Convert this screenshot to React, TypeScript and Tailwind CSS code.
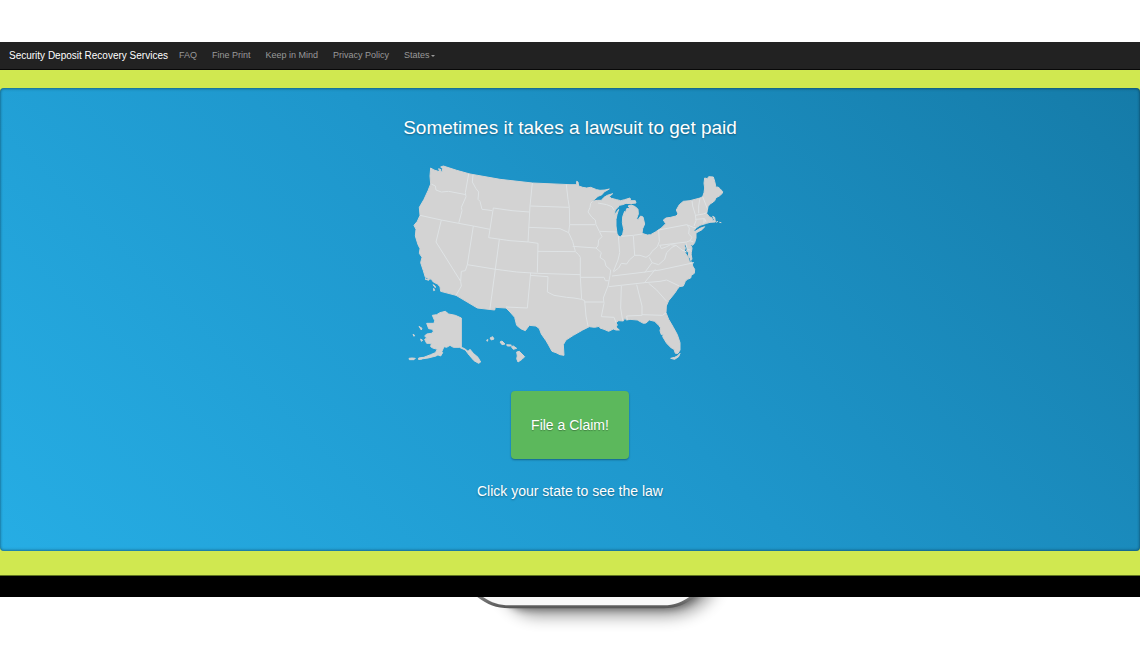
import React from "react";

const navLinks = ["FAQ", "Fine Print", "Keep in Mind", "Privacy Policy"];

const mainland =
  "M92 36L102 42L112 45L119 48L116 38L123 41L121 49L127 46L128 38L122 33L130 30L170 43L210 54L300 70L397 81L510 86L530 86L530 76L534 78L536 90L548 94L560 96L572 94L590 101L600 103L615 102L628 99L612 108L606 116L594 121L583 131L576 136L592 133L604 133L612 124L622 118L638 113L628 122L634 127L650 131L662 134L674 131L690 126L692 134L706 134L708 141L690 143L678 142L668 146L658 148L654 154L646 162L642 176L650 168L656 160L651 176L648 190L648 210L651 232L656 241L662 242L668 235L671 220L667 200L668 182L674 166L676 172L680 158L690 156L684 150L694 147L706 152L714 160L715 174L710 188L714 191L722 180L729 183L734 204L728 218L726 232L742 237L752 236L766 228L784 216L797 203L790 192L798 186L812 184L828 180L834 174L829 162L838 146L850 136L870 134L900 126L908 122L912 110L914 96L912 82L914 66L922 68L926 62L940 63L944 76L948 94L954 93L960 98L968 107L967 112L958 120L948 125L944 134L940 138L930 144L924 152L922 164L920 172L928 182L936 186L938 194L944 194L938 181L944 184L946 198L930 199L920 202L900 208L888 216L882 224L888 232L888 246L884 260L878 268L870 262L876 276L874 290L872 308L865 300L866 290L860 285L862 276L857 266L852 266L856 276L853 286L860 297L866 305L868 318L876 318L878 330L884 340L883 352L874 358L872 366L862 370L856 376L850 390L838 392L832 400L824 412L806 434L799 450L798 470L806 490L820 514L832 536L840 560L840 582L834 592L826 592L822 580L814 576L800 562L788 542L790 534L784 536L780 524L782 516L776 508L764 496L748 492L738 501L730 502L712 492L690 490L680 492L674 487L670 495L656 494L648 500L652 507L648 513L658 522L648 522L640 519L626 526L612 520L600 516L598 511L584 514L568 512L548 522L520 538L498 552L490 566L492 598L480 596L468 590L456 586L444 564L438 554L424 534L418 518L408 510L388 508L376 524L362 518L350 508L344 484L330 468L318 456L286 454L284 462L232 456L168 418L122 406L120 392L112 384L100 378L94 370L76 364L70 344L62 320L66 304L58 292L60 278L54 266L46 240L48 220L42 208L52 196L60 178L58 154L72 130L84 104L92 84L90 60Z";

const islands = [
  "M882 228L900 217L914 212L906 221L888 231Z",
  "M948 199L954 196M958 199L964 200",
  "M868 276L874 280L870 290Z",
  "M870 300L874 298L876 310L872 314Z",
  "M812 607L824 604L832 600L840 592L836 602L824 610Z",
  "M77 370L88 369L86 373ZM99 386L106 391L106 395ZM101 397L104 403L101 404ZM75 368L79 370Z",
  "M97 478L110 476L120 470L136 466L146 474L166 478L184 486L184 574L194 578L204 586L210 580L220 592L234 604L242 618L236 622L222 614L208 598L196 582L178 574L160 574L150 568L140 574L132 572L124 590L108 600L84 606L56 610L92 596L106 590L112 580L98 576L92 572L94 562L80 562L74 550L80 546L74 540L80 534L94 532L100 528L98 520L86 518L80 502L102 502L104 494Z",
  "M27 607L36 606L46 607L42 611L28 611ZM56 606L70 604L66 609L56 610Z",
  "M57 511L66 517L64 522ZM39 535L44 538L42 541ZM62 549L68 553L64 556Z",
  "M112 596L124 586L128 590L122 600Z",
  "M270 546L278 542L282 549L274 552ZM260 552L264 551L262 556Z",
  "M300 558L306 555L315 564L306 566Z",
  "M320 566L334 567L332 570L322 570ZM334 572L340 570L350 577L340 580Z",
  "M350 588L358 586L374 602L366 610L354 618L350 608L352 600Z",
];

const borders = [
  "M94 84L106 90L108 102L124 108L146 106L198 116",
  "M206 54L196 110L198 122L184 154L186 164L176 202",
  "M60 178L124 192L176 202L220 210L270 220",
  "M219 57L217 78L228 98L236 108L234 130L240 136L246 160L264 162L276 164",
  "M280 156L336 164L388 168",
  "M280 156L266 245L330 254L386 258L414 262L412 350",
  "M397 81L390 150L384 258",
  "M391 150L507 154",
  "M386 214L480 218L506 230L518 256L526 286",
  "M124 192L108 258L182 376L184 390L168 418",
  "M220 210L202 326L288 340L350 348L412 352L540 356",
  "M202 326L196 344L184 346L182 376",
  "M298 250L270 458",
  "M414 286L526 287L536 296L541 304L541 364L545 430",
  "M392 350L382 456L318 453",
  "M390 358L444 362L442 408L462 418L500 424L522 426L545 430L554 434L558 480L564 510",
  "M499 86L504 130L508 154L509 205L506 230",
  "M509 206L586 206",
  "M578 136L572 142L570 154L564 168L576 184L586 192L588 206L598 226L606 242L596 252L594 270L588 276L518 271",
  "M594 141L620 146L636 152L642 162",
  "M600 226L650 228",
  "M655 240L659 290L654 312L640 346",
  "M588 276L604 290L600 304L614 314L618 330L632 342L630 358L624 390",
  "M541 364L612 364L616 374L626 374",
  "M664 241L700 238L726 234",
  "M700 240L704 298L688 312L680 324L664 322L656 336L640 348",
  "M704 298L720 298L738 304L750 296L756 286L772 272L778 256L776 222",
  "M776 222L860 206L868 216L866 234L876 244L870 254L860 258L778 268",
  "M636 360L720 350L780 342L882 320",
  "M626 392L734 380L780 376L800 372L838 390",
  "M748 304L756 320L734 350M756 320L776 326L794 310L800 290L816 274L828 268",
  "M780 268L784 278L800 272L812 266L828 268L846 282L860 288",
  "M732 382L766 340M746 382L770 402L800 436",
  "M624 390L610 426L612 442L604 482L642 484L648 500",
  "M554 438L610 438",
  "M664 390L662 456L668 494",
  "M710 386L726 450L726 478L680 480L682 492",
  "M726 476L788 478L798 470",
  "M870 254L880 258M858 262L862 280L872 282",
  "M860 206L880 214L888 216M882 210L888 194L886 176L878 150L876 134",
  "M900 126L896 150L896 172M908 122L922 158",
  "M886 178L910 174L920 170M886 190L914 188L918 198M912 188L912 202",
];

function StateMap() {
  return (
    <svg
      role="img"
      aria-label="United States"
      viewBox="0 0 1020 645"
      className="mt-4 h-[215px] w-[340px] max-w-full cursor-pointer"
    >
      <g fill="#d3d3d3" stroke="#d3d3d3" strokeWidth="3" strokeLinejoin="round">
        <path d={mainland} />
        {islands.map((d) => (
          <path key={d} d={d} />
        ))}
      </g>
      <g fill="none" stroke="#dfe3e5" strokeWidth="3" strokeLinejoin="round">
        {borders.map((d) => (
          <path key={d} d={d} />
        ))}
      </g>
    </svg>
  );
}

function DeviceEdge() {
  return (
    <svg aria-hidden="true" viewBox="-180 0 1140 171" className="mx-auto block h-[57px] w-[380px]">
      <defs>
        <filter id="soft" x="-20%" y="-100%" width="140%" height="300%">
          <feGaussianBlur stdDeviation="24" />
        </filter>
        <filter id="near" x="-20%" y="-100%" width="140%" height="300%">
          <feGaussianBlur stdDeviation="9" />
        </filter>
        <linearGradient id="rim" x1="0" x2="0" y1="0" y2="1">
          <stop offset="0" stopColor="#8a8a8a" />
          <stop offset="1" stopColor="#555" />
        </linearGradient>
      </defs>
      <path
        d="M170 -40H830C810 20 750 56 670 56H300C240 56 210 30 170 -40Z"
        fill="#000"
        opacity="0.4"
        filter="url(#soft)"
      />
      <path
        d="M180 -20H790C765 20 730 40 670 40H260C220 40 200 20 180 -20Z"
        fill="#000"
        opacity="0.3"
        filter="url(#near)"
      />
      <path d="M96 -12C140 22 160 34 215 34H670C720 34 750 14 776 -12Z" fill="url(#rim)" />
      <path d="M112 -12C150 16 170 25 215 25H670C712 25 740 8 762 -12Z" fill="#f8f8f8" />
    </svg>
  );
}

export default function App() {
  return (
    <div className="min-h-screen bg-white pt-[42px] font-['Liberation_Sans',Arial,sans-serif]">
      <nav className="flex h-7 items-center gap-[15px] border-b border-[#080808] bg-[#222] pl-[9px] text-[9px] text-[#999]">
        <a href="#home" className="-mr-1 text-[10px] text-white">
          Security Deposit Recovery Services
        </a>
        {navLinks.map((label) => (
          <a key={label} href="#info" className="hover:text-white">
            {label}
          </a>
        ))}
        <button type="button" className="flex items-center gap-px hover:text-white">
          States
          <svg aria-hidden="true" viewBox="0 0 4 2" className="h-[2px] w-1" fill="currentColor">
            <path d="M0 0H4L2 2Z" />
          </svg>
        </button>
      </nav>

      <main className="bg-[#d0e850] pt-[18px] pb-6">
        <section className="flex flex-col items-center rounded bg-linear-[45deg,#26ade4,#1e96cb_50%,#157ba8] px-4 pt-7 pb-12 text-center text-white shadow-[inset_0_1px_3px_rgba(0,0,0,0.3),inset_0_-1px_3px_rgba(0,0,0,0.3)] text-shadow-[0_1px_2px_rgba(0,0,0,0.35)]">
          <h1 className="text-[19px] leading-6">Sometimes it takes a lawsuit to get paid</h1>
          <StateMap />
          <button
            type="button"
            className="mt-5 rounded bg-[#5cb85c] px-5 py-[22px] text-[14px] leading-6 shadow-[0_1px_2px_rgba(0,0,0,0.35)] text-shadow-[0_1px_1px_rgba(0,0,0,0.3)]"
          >
            File a Claim!
          </button>
          <p className="mt-5 text-[14px] leading-6">Click your state to see the law</p>
        </section>
      </main>

      <footer className="h-[22px] border-t border-[#5f7420] bg-black" />
      <DeviceEdge />
    </div>
  );
}
